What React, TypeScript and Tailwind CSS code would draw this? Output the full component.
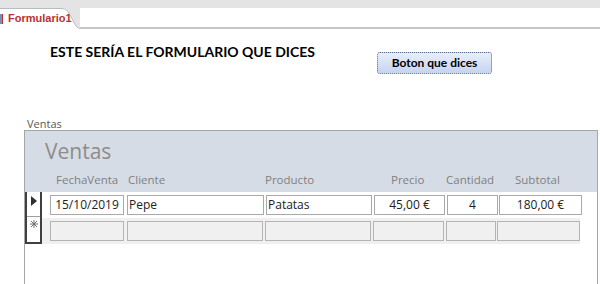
import React from "react";

const cols = [
  { name: "FechaVenta", w: "w-[74px] ml-[8px]", value: "15/10/2019", align: "text-center" },
  { name: "Cliente", w: "w-[137px] ml-[3px]", value: "Pepe", align: "text-left pl-[1px]" },
  { name: "Producto", w: "w-[106px] ml-[2px]", value: "Patatas", align: "text-left pl-[1px]" },
  { name: "Precio", w: "w-[71px] ml-[2px]", value: "45,00 €", align: "text-center" },
  { name: "Cantidad", w: "w-[51px] ml-[2px]", value: "4", align: "text-center" },
  { name: "Subtotal", w: "w-[83px] ml-[1px]", value: "180,00 €", align: "text-center" },
];

export default function App() {
  return (
    <div className="w-[600px] h-[284px] bg-white overflow-hidden font-['Open_Sans',sans-serif]">
      <div className="h-[8px] bg-[#e4e4e4]" />
      <div className="relative h-[21px] bg-[#e4e4e4] flex">
        <div className="relative w-[80px] h-full">
          <svg className="absolute inset-0" width="80" height="21" viewBox="0 0 80 21">
            <path d="M0 0 H62 Q66 0 68 3 L76 18 Q78 20 80 20 V21 H0 Z" fill="#ffffff" />
            <path d="M0 0.5 H62 Q66 0.5 68 3.5 L76 18 Q78 20.5 80 20.5" fill="none" stroke="#b8bcc0" />
          </svg>
          <div className="relative flex items-center h-full">
            <div className="w-[3px] h-[10px] bg-[#7a8fb8] border-r border-[#c03030]" />
            <span className="ml-[5px] text-[11px] font-bold text-[#b8313a] font-['Liberation_Sans',sans-serif] leading-none">
              Formulario1
            </span>
          </div>
        </div>
        <div className="flex-1 bg-white border-b-2 border-[#c3c7cb]" />
      </div>

      <div className="flex items-start mt-[15px]">
        <h1 className="ml-[50px] w-[327px] mt-[1px] text-[14px] font-bold text-black font-['Lato',sans-serif] leading-none">
          ESTE SERÍA EL FORMULARIO QUE DICES
        </h1>
        <button className="mt-[8px] w-[115px] h-[22px] rounded-[3px] border border-dotted border-[#5a6a8e] bg-gradient-to-b from-[#e8eefb] to-[#c7d4f0] text-[12px] font-bold text-black font-['Lato',sans-serif]">
          Boton que dices
        </button>
      </div>

      <div className="ml-[27px] mt-[44px] text-[11px] leading-[12px] text-[#595959]">Ventas</div>

      <div className="ml-[24px] w-[574px] h-[200px] border-t border-x border-[#a6a6a6]">
        <div className="h-[61px] bg-[#d6dce5] pl-[20px]">
          <div className="pt-[6px] text-[21px] leading-[28px] text-[#8c8c8c]">Ventas</div>
          <div className="flex mt-[8px] text-[11.5px] leading-[14px] text-[#808080] pl-[11px]">
            <div className="w-[72px]">FechaVenta</div>
            <div className="w-[137px]">Cliente</div>
            <div className="w-[126px]">Producto</div>
            <div className="w-[55px]">Precio</div>
            <div className="w-[69px]">Cantidad</div>
            <div>Subtotal</div>
          </div>
        </div>

        <div className="flex">
          <div className="w-[17px] border-x-2 border-b-2 border-[#404040]">
            <div className="h-[25px] border-b border-[#a0a0a0] flex justify-center pt-[4px]">
              <svg width="6" height="10" viewBox="0 0 6 10">
                <path d="M0 0 L6 5 L0 10 Z" fill="#303030" />
              </svg>
            </div>
            <div className="h-[25px] flex justify-center pt-[3px]">
              <svg width="8" height="8" viewBox="0 0 8 8" stroke="#707070" strokeWidth="1">
                <path d="M4 0 V8 M0 4 H8 M1 1 L7 7 M7 1 L1 7" />
              </svg>
            </div>
          </div>
          <div className="flex-1">
            <div className="h-[26px] flex items-start pt-[3px]">
              {cols.map((c) => (
                <div
                  key={c.name}
                  className={`${c.w} h-[20px] border border-[#a9a9a9] bg-white text-[12px] leading-[18px] text-[#222] ${c.align}`}
                >
                  {c.value}
                </div>
              ))}
            </div>
            <div className="h-[26px] w-[538px] bg-[#f0f0f0] flex items-start pt-[3px]">
              {cols.map((c) => (
                <div key={c.name} className={`${c.w} h-[20px] border border-[#b4b4b4] bg-[#f0f0f0]`} />
              ))}
            </div>
          </div>
        </div>
      </div>
    </div>
  );
}
